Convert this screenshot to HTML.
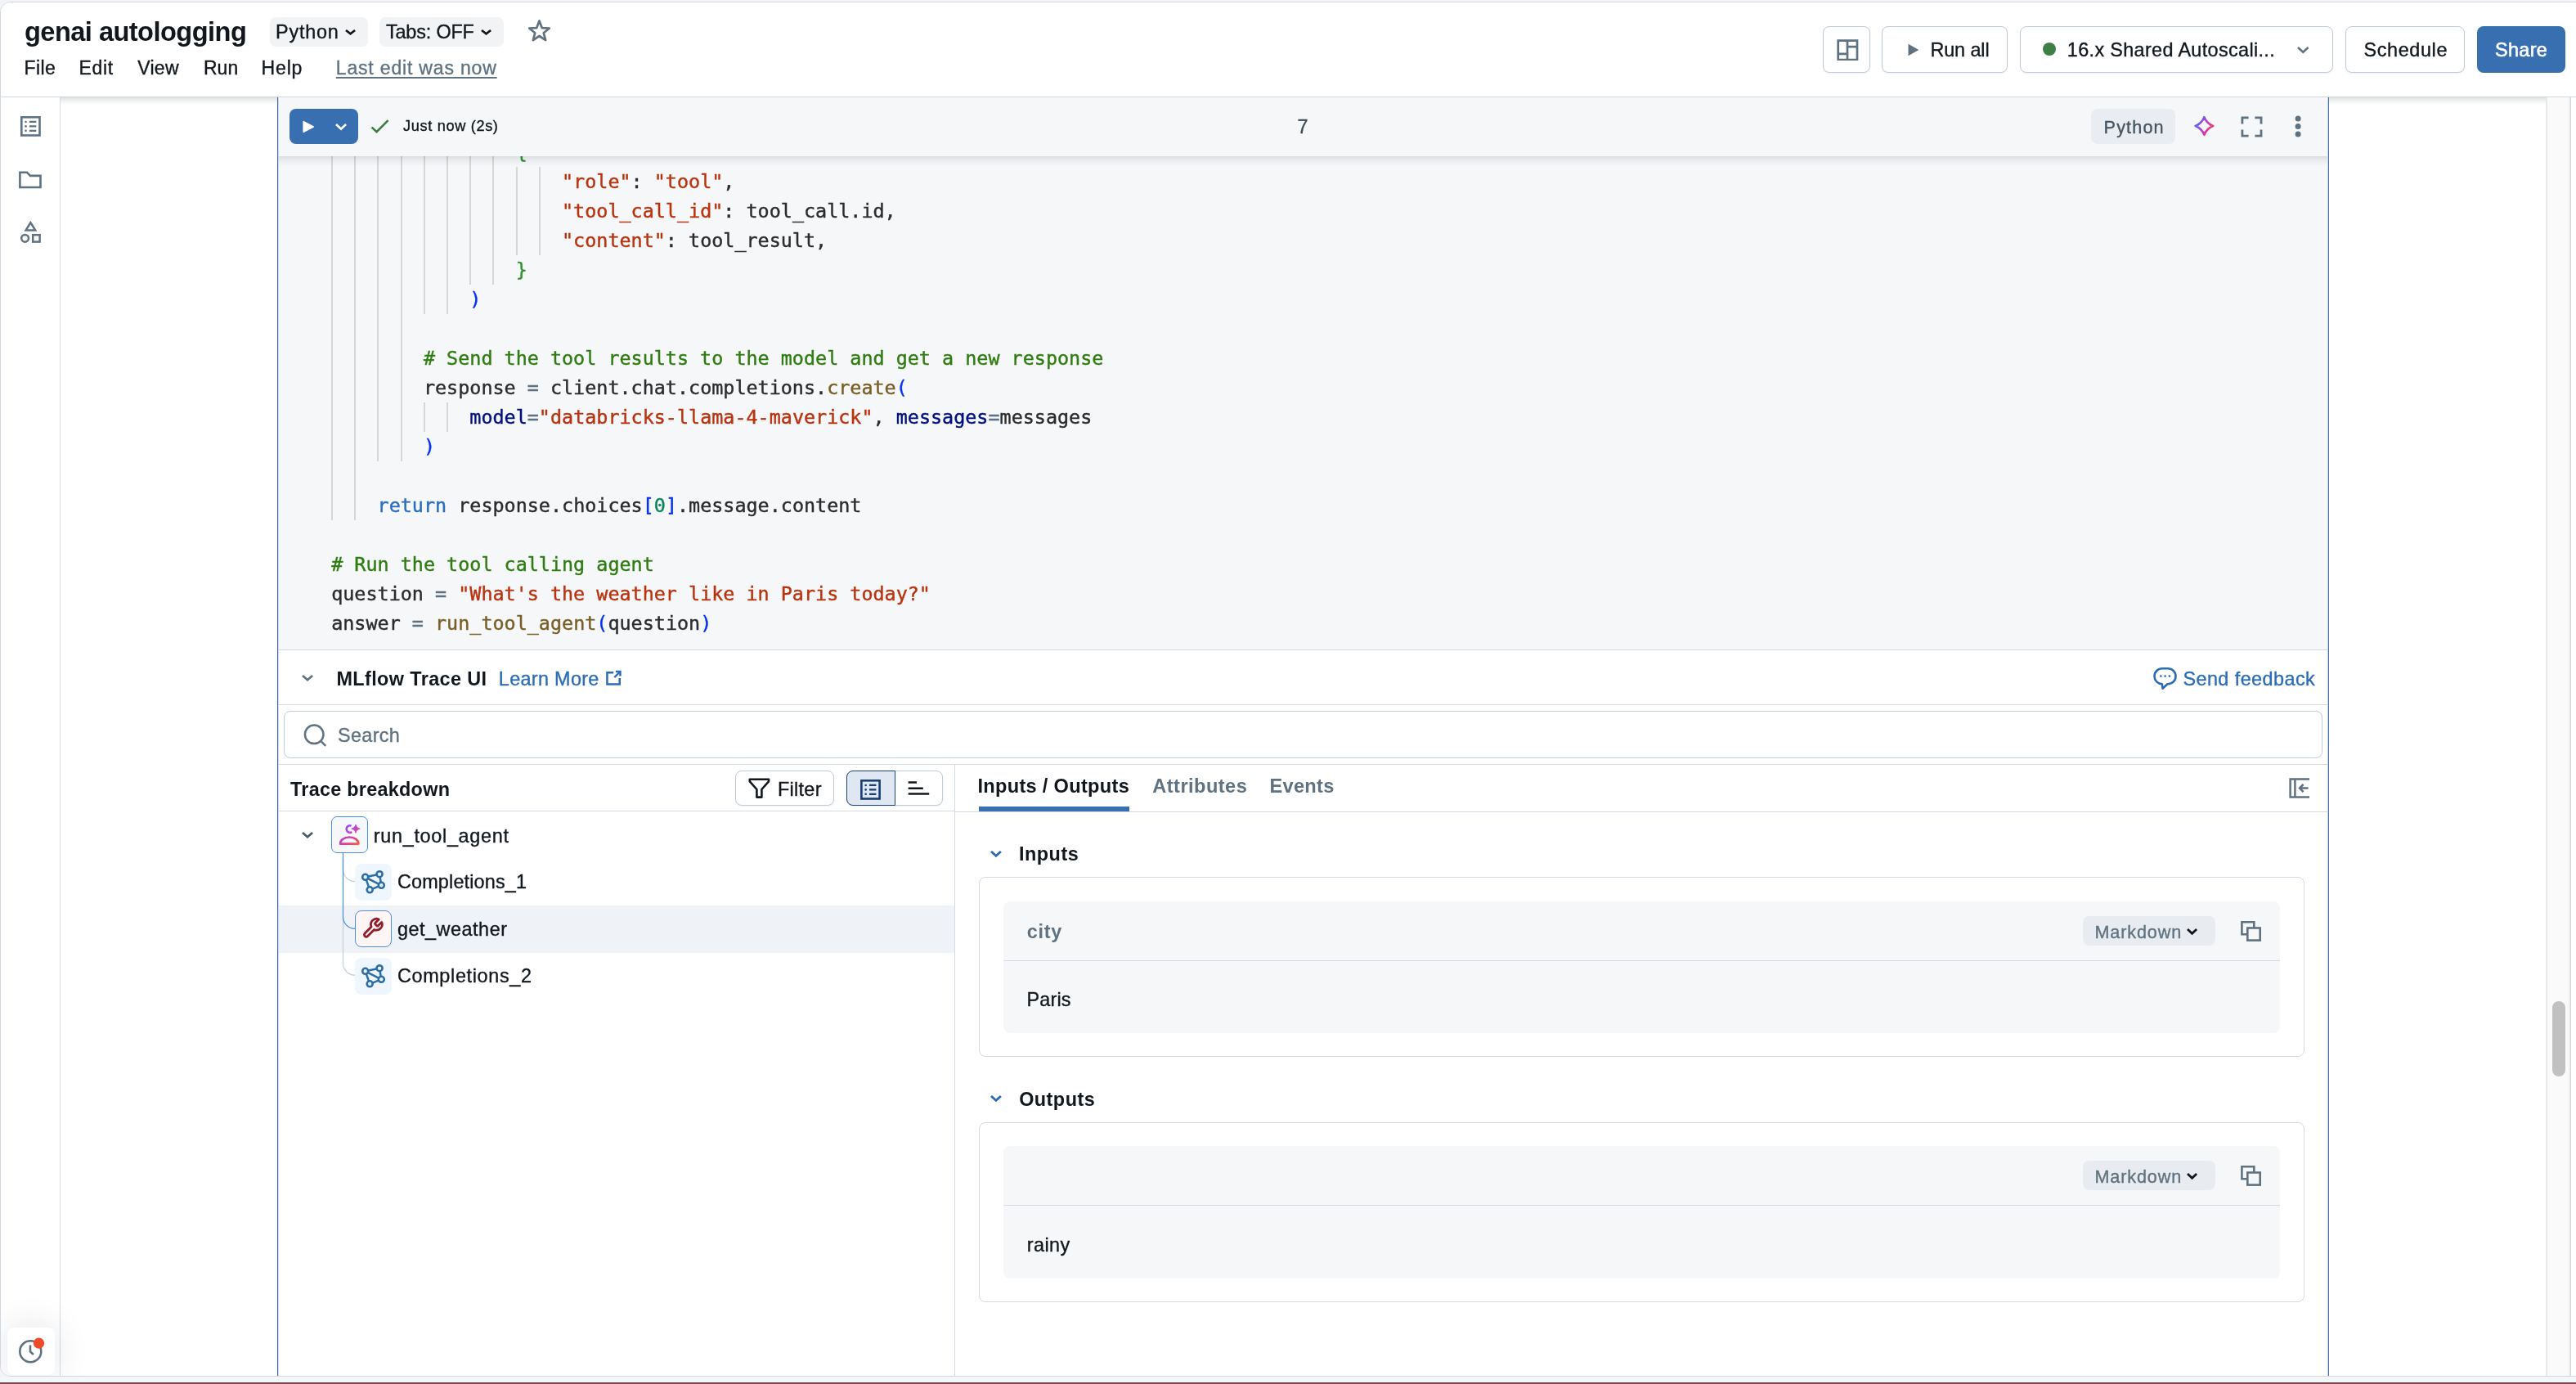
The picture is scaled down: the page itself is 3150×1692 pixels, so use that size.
<!DOCTYPE html>
<html lang="en">
<head>
<meta charset="utf-8">
<title>genai autologging</title>
<style>
html,body{margin:0;padding:0;}
body{width:3150px;height:1692px;background:#f2f4f7;font-family:"Liberation Sans",sans-serif;color:#11171c;}
#root{position:relative;width:3150px;height:1692px;overflow:hidden;background:#f2f4f7;}
*{box-sizing:border-box;}
.abs{position:absolute;}
.t{position:absolute;white-space:nowrap;line-height:1;-webkit-text-stroke:0.35px;}
#frame{position:absolute;left:0;top:2px;width:3160px;height:1681px;background:#fff;border:1px solid #d0d7e0;border-radius:13px 0 0 13px;overflow:hidden;}
#in{will-change:transform;position:absolute;left:-1px;top:-3px;width:3150px;height:1692px;}
#bottomband{position:absolute;left:0;top:1683px;width:3150px;height:7px;background:#f5f6f8;border-bottom:1px solid #fff;}
#bottomline{position:absolute;left:0;top:1690px;width:3150px;height:2px;background:#7b4549;}
#header{position:absolute;left:0;top:0;width:3150px;height:119px;background:#fff;border-bottom:1px solid #cfd7e1;z-index:20;}
.pill{position:absolute;background:#f2f3f5;border-radius:7px;}
.btn{position:absolute;background:#fff;border:1px solid #c0cbd8;border-radius:8px;box-shadow:0 1px 2px rgba(30,45,70,.07);}
#sidebar{position:absolute;left:0;top:119px;width:74px;height:1570px;border-right:1px solid #d3dae3;background:#fff;z-index:5;}
#cell{position:absolute;left:339px;top:119px;width:2509px;height:1570px;border-left:1px solid #3d71b1;border-right:1px solid #3d71b1;background:#fff;}
#cell:before,#cell:after{content:'';position:absolute;top:0;width:1px;height:100%;background:rgba(61,113,177,.28);}
#cell:before{left:0}#cell:after{right:0}
.hsh{position:absolute;top:119px;height:10px;background:linear-gradient(rgba(40,48,48,.15),rgba(40,48,48,.05) 50%,rgba(40,48,48,0));z-index:6;}
#celltb{position:absolute;left:341px;top:119px;width:2505px;height:72px;border-radius:5px 5px 0 0;background:#f6f7f9;z-index:10;}
#tsh{position:absolute;left:341px;top:191px;width:2505px;height:12px;background:linear-gradient(rgba(30,40,60,.12),rgba(30,40,60,.055) 40%,rgba(30,40,60,0));z-index:10;}
#code{position:absolute;left:341px;top:191px;width:2505px;height:604px;background:#f6f7f9;border-bottom:1px solid #d3dae3;overflow:hidden;}
.cl{position:absolute;left:64.2px;height:36px;line-height:36px;font-family:"DejaVu Sans Mono","Liberation Mono",monospace;font-size:23.42px;white-space:pre;color:#2a2c2e;-webkit-text-stroke:0.4px;}
.g{position:absolute;width:2px;background:#d6d6d6;}
.s{color:#b9330f}.c{color:#2f7d12}.k{color:#2a6fbf}.f{color:#795e26}.v{color:#001080}.b1{color:#0431fa}.b2{color:#319331}.n{color:#098658}.o{color:#5f7281}
#gutter{position:absolute;left:3113px;top:119px;width:31px;height:1570px;background:#fafafa;border-left:2px solid #e8e8e8;border-right:1px solid #cfd6df;z-index:4;}
#gutter:after{content:'';position:absolute;right:0;top:0;width:2px;height:100%;background:#efefef;}
#thumb{position:absolute;left:3121px;top:1224px;width:16px;height:92px;border-radius:8px;background:#c1c1c1;z-index:6;}
.hl{position:absolute;height:1px;background:#d3dae3;}
.vl{position:absolute;width:1px;background:#d3dae3;}
#hdr,#tb,#out{position:absolute;left:0;top:0;}
#hdr{z-index:30}#tb{z-index:15}#out{z-index:3}#sb{position:absolute;left:0;top:0;z-index:7}
.card{position:absolute;border:1px solid #d3dae3;border-radius:8px;background:#fff;}
.inner{position:absolute;background:#f6f7f9;border-radius:8px;}
</style>
</head>
<body>
<div id="root">
<div id="frame"><div id="in">
<div id="sidebar"></div>
<div id="cell"></div>
<div class="hsh" style="left:74px;width:265px"></div><div class="hsh" style="left:2848px;width:265px"></div>
<div id="code">
<div class="g" style="left:64px;top:-23px;height:468px"></div>
<div class="g" style="left:92px;top:-23px;height:468px"></div>
<div class="g" style="left:120px;top:-23px;height:396px"></div>
<div class="g" style="left:149px;top:-23px;height:396px"></div>
<div class="g" style="left:177px;top:-23px;height:216px"></div>
<div class="g" style="left:177px;top:301px;height:36px"></div>
<div class="g" style="left:205px;top:-23px;height:216px"></div>
<div class="g" style="left:205px;top:301px;height:36px"></div>
<div class="g" style="left:233px;top:-23px;height:180px"></div>
<div class="g" style="left:261px;top:-23px;height:180px"></div>
<div class="g" style="left:290px;top:13px;height:108px"></div>
<div class="g" style="left:318px;top:13px;height:108px"></div>
<div class="cl" style="top:-23px">                <span class="b2">{</span></div>
<div class="cl" style="top:13px">                    <span class="s">"role"</span>: <span class="s">"tool"</span>,</div>
<div class="cl" style="top:49px">                    <span class="s">"tool_call_id"</span>: tool_call.id,</div>
<div class="cl" style="top:85px">                    <span class="s">"content"</span>: tool_result,</div>
<div class="cl" style="top:121px">                <span class="b2">}</span></div>
<div class="cl" style="top:157px">            <span class="b1">)</span></div>
<div class="cl" style="top:229px">        <span class="c"># Send the tool results to the model and get a new response</span></div>
<div class="cl" style="top:265px">        response <span class="o">=</span> client.chat.completions.<span class="f">create</span><span class="b1">(</span></div>
<div class="cl" style="top:301px">            <span class="v">model</span><span class="o">=</span><span class="s">"databricks-llama-4-maverick"</span>, <span class="v">messages</span><span class="o">=</span>messages</div>
<div class="cl" style="top:337px">        <span class="b1">)</span></div>
<div class="cl" style="top:409px">    <span class="k">return</span> response.choices<span class="b1">[</span><span class="n">0</span><span class="b1">]</span>.message.content</div>
<div class="cl" style="top:481px"><span class="c"># Run the tool calling agent</span></div>
<div class="cl" style="top:517px">question <span class="o">=</span> <span class="s">"What's the weather like in Paris today?"</span></div>
<div class="cl" style="top:553px">answer <span class="o">=</span> <span class="f">run_tool_agent</span><span class="b1">(</span>question<span class="b1">)</span></div>
</div>
<div id="celltb"></div><div id="tsh"></div>
<div id="gutter"></div>
<div id="thumb"></div>
<div id="header"></div>
<div id="hdr">
<div class="t" id="title" style="left:30.00px;top:22.50px;font-size:32.60px;font-weight:700;-webkit-text-stroke:0;letter-spacing:-0.544px;">genai autologging</div>
<div class="pill" id="pill1" style="left:330.0px;top:21.0px;width:120.0px;height:35.6px;"></div>
<div class="t" id="py1" style="left:337.00px;top:27.60px;font-size:23.40px;letter-spacing:0.790px;">Python</div>
<svg class="abs" id="ch1" style="left:420.96px;top:34.56px;" width="15.09" height="8.34" viewBox="-2.00 -2.00 15.09 8.34" fill="none"><path d="M0 0 L5.54 4.34 L11.09 0" stroke="#11171c" stroke-width="2.70" stroke-linejoin="miter" stroke-linecap="butt"/></svg>
<div class="pill" id="pill2" style="left:464.0px;top:21.0px;width:152.0px;height:35.6px;"></div>
<div class="t" id="tabs" style="left:471.90px;top:27.60px;font-size:23.40px;letter-spacing:-0.152px;">Tabs: OFF</div>
<svg class="abs" id="ch2" style="left:586.96px;top:34.56px;" width="15.09" height="8.34" viewBox="-2.00 -2.00 15.09 8.34" fill="none"><path d="M0 0 L5.54 4.34 L11.09 0" stroke="#11171c" stroke-width="2.70" stroke-linejoin="miter" stroke-linecap="butt"/></svg>
<svg class="abs" id="star" style="left:642px;top:20px;" width="36" height="36" viewBox="642 20 36 36" fill="none"><path d="M659.50 25.50 L662.73 34.05 L671.86 34.48 L664.73 40.20 L667.14 49.02 L659.50 44.00 L651.86 49.02 L654.27 40.20 L647.14 34.48 L656.27 34.05 Z" stroke="#5f7281" stroke-width="2.7" stroke-linejoin="round"/></svg>
<div class="t" id="m0" style="left:29.60px;top:71.80px;font-size:23.00px;letter-spacing:0.380px;">File</div>
<div class="t" id="m1" style="left:96.60px;top:71.80px;font-size:23.00px;letter-spacing:0.656px;">Edit</div>
<div class="t" id="m2" style="left:168.20px;top:71.80px;font-size:23.00px;letter-spacing:0.321px;">View</div>
<div class="t" id="m3" style="left:249.00px;top:71.80px;font-size:23.00px;">Run</div>
<div class="t" id="m4" style="left:319.60px;top:71.80px;font-size:23.00px;letter-spacing:0.832px;">Help</div>
<div class="t" id="lastedit" style="left:410.80px;top:71.80px;font-size:23.00px;color:#5f7281;letter-spacing:0.824px;text-decoration:underline;text-decoration-thickness:2px;text-underline-offset:3px;">Last edit was now</div>
<div class="btn" id="b_layout" style="left:2229.0px;top:32.0px;width:58.0px;height:57.0px;"></div>
<svg class="abs" id="i_layout" style="left:2244.50px;top:46.70px;" width="28.00" height="27.50" viewBox="0 0 28 27.5" fill="none"><path d="M2.7 2.7 H26 V26 H2.7 Z M14 2.7 V26 M2.7 18.9 H14 M14 10.2 H26" stroke="#5f7281" stroke-width="2.7"/></svg>
<div class="btn" id="b_runall" style="left:2301.0px;top:32.0px;width:154.0px;height:57.0px;"></div>
<svg class="abs" id="i_play" style="left:2333.00px;top:53.00px;" width="14.00" height="16.00" viewBox="0 0 14 16" fill="none"><path d="M0.5 0.8 L13.3 8 L0.5 15.2 Z" fill="#5f7281"/></svg>
<div class="t" id="runall" style="left:2360.40px;top:49.60px;font-size:23.40px;letter-spacing:-0.090px;">Run all</div>
<div class="btn" id="b_cluster" style="left:2470.0px;top:32.0px;width:383.0px;height:57.0px;"></div>
<div class="abs" id="dot" style="left:2498.3px;top:52.3px;width:16.2px;height:16.2px;border-radius:50%;background:#3d7f45"></div>
<div class="t" id="cluster" style="left:2527.80px;top:49.60px;font-size:23.40px;letter-spacing:0.354px;">16.x Shared Autoscali...</div>
<svg class="abs" id="ch3" style="left:2807.82px;top:55.82px;" width="16.56" height="9.74" viewBox="-2.00 -2.00 16.56 9.74" fill="none"><path d="M0 0 L6.28 5.74 L12.56 0" stroke="#5f7281" stroke-width="2.60" stroke-linejoin="miter" stroke-linecap="butt"/></svg>
<div class="btn" id="b_sched" style="left:2868.0px;top:32.0px;width:146.0px;height:57.0px;"></div>
<div class="t" id="sched" style="left:2890.40px;top:49.60px;font-size:23.40px;letter-spacing:0.646px;">Schedule</div>
<div class="abs" id="b_share" style="left:3029.0px;top:32.0px;width:108.0px;height:57.0px;background:#376fb1;border-radius:8px;"></div>
<div class="t" id="share" style="left:3050.90px;top:49.60px;font-size:23.40px;color:#fff;letter-spacing:0.389px;-webkit-text-stroke:0.6px;">Share</div>
</div>
<div id="sb">
<svg class="abs" id="sb1" style="left:25.00px;top:142.00px;" width="24.80" height="24.80" viewBox="0 0 25 25" fill="none"><rect x="1.3" y="1.3" width="22.4" height="22.4" stroke="#5f7281" stroke-width="2.6"/><path d="M11 7 H19.5 M11 12.5 H19.5 M11 18 H19.5" stroke="#5f7281" stroke-width="2.2"/><circle cx="6.6" cy="7" r="1.3" fill="#5f7281"/><circle cx="6.6" cy="12.5" r="1.3" fill="#5f7281"/><circle cx="6.6" cy="18" r="1.3" fill="#5f7281"/></svg>
<svg class="abs" id="sb2" style="left:22.00px;top:207.50px;" width="30.00" height="24.00" viewBox="0 0 30 24" fill="none"><path d="M2.4 2.8 H11 L15 6.9 H27.5 V21 H2.4 Z" stroke="#5f7281" stroke-width="2.6" stroke-linejoin="miter"/></svg>
<svg class="abs" id="sb3" style="left:24.00px;top:269.00px;" width="27.00" height="29.00" viewBox="0 0 27 29" fill="none"><path d="M13.4 3.2 L19.2 12.6 H7.6 Z" stroke="#5f7281" stroke-width="2.5" stroke-linejoin="miter"/><circle cx="6.6" cy="22.3" r="4.4" stroke="#5f7281" stroke-width="2.5"/><rect x="16.2" y="18.2" width="8.4" height="8.4" stroke="#5f7281" stroke-width="2.5"/></svg>
<div class="abs" id="hist" style="left:9.0px;top:1623.0px;width:58.0px;height:57.5px;background:#fff;border-radius:8px;box-shadow:0 0 40px rgba(30,45,70,.13);"></div>
<svg class="abs" id="i_hist" style="left:20.00px;top:1634.00px;" width="36.00" height="36.00" viewBox="0 0 36 36" fill="none"><circle cx="17.3" cy="18.2" r="13" stroke="#5f7281" stroke-width="2.6"/><path d="M17 10.5 V18.5 L21 22" stroke="#5f7281" stroke-width="2.6"/><circle cx="27.5" cy="8.2" r="6.6" fill="#f04a2b"/></svg>
</div>
<div id="tb">
<div class="abs" id="runbtn" style="left:354.0px;top:133.0px;width:84.0px;height:43.0px;background:#376fb1;border-radius:8px;"></div>
<svg class="abs" id="i_run" style="left:368.50px;top:146.00px;" width="16.50" height="18.00" viewBox="0 0 16.5 18" fill="none"><path d="M2.2 2.6 L14.2 9 L2.2 15.4 Z" fill="#fff" stroke="#fff" stroke-width="1.6" stroke-linejoin="round"/></svg>
<svg class="abs" id="ch4" style="left:408.56px;top:149.96px;" width="16.09" height="9.64" viewBox="-2.00 -2.00 16.09 9.64" fill="none"><path d="M0 0 L6.04 5.64 L12.09 0" stroke="#fff" stroke-width="2.70" stroke-linejoin="miter" stroke-linecap="butt"/></svg>
<svg class="abs" id="i_check" style="left:451.00px;top:144.00px;" width="27.00" height="21.00" viewBox="0 0 27 21" fill="none"><path d="M3.6 11.6 L9.6 17.2 L23.6 3.2" stroke="#3a7d3f" stroke-width="2.6"/></svg>
<div class="t" id="justnow" style="left:493.10px;top:145.20px;font-size:18.20px;letter-spacing:0.640px;">Just now (2s)</div>
<div class="t" id="seven" style="left:1586.50px;top:143.60px;font-size:23.40px;color:#3d4b58;">7</div>
<div class="abs" id="pill3" style="left:2557.0px;top:133.1px;width:103.0px;height:42.6px;background:#e9ecf1;border-radius:8px;"></div>
<div class="t" id="py2" style="left:2572.60px;top:145.00px;font-size:21.60px;color:#445461;letter-spacing:1.151px;">Python</div>
<svg class="abs" id="spark" style="left:2681px;top:140px" width="29" height="28" viewBox="0 0 29 28" fill="none"><defs><linearGradient id="sg" x1="3" y1="9" x2="25" y2="22" gradientUnits="userSpaceOnUse"><stop offset="0" stop-color="#4a6ff0"/><stop offset=".45" stop-color="#b040d8"/><stop offset=".75" stop-color="#e03c8c"/><stop offset="1" stop-color="#f4552c"/></linearGradient></defs><path d="M14.4 3.2 C15.9 7.8 20.6 12.5 25.2 14 C20.6 15.5 15.9 20.2 14.4 24.8 C12.9 20.2 8.2 15.5 3.6 14 C8.2 12.5 12.9 7.8 14.4 3.2 Z" stroke="url(#sg)" stroke-width="2.6" stroke-linejoin="round"/></svg>
<svg class="abs" id="i_full" style="left:2739.00px;top:140.50px;" width="29.00" height="28.00" viewBox="0 0 29 28" fill="none"><path d="M2.9 10.5 V2.9 H10.6 M18.4 2.9 H26 V10.5 M26 17.6 V25.2 H18.4 M10.6 25.2 H2.9 V17.6" stroke="#5f7281" stroke-width="2.8"/></svg>
<svg class="abs" id="i_kebab" style="left:2805.00px;top:140.00px;" width="10.00" height="30.00" viewBox="0 0 10 30" fill="none"><circle cx="5.1" cy="5" r="3.5" fill="#5f7281"/><circle cx="5.1" cy="14.5" r="3.5" fill="#5f7281"/><circle cx="5.1" cy="24.1" r="3.5" fill="#5f7281"/></svg>
</div>
<div id="out">
<svg class="abs" id="ch5" style="left:368.42px;top:824.12px;" width="16.06" height="9.24" viewBox="-2.00 -2.00 16.06 9.24" fill="none"><path d="M0 0 L6.03 5.24 L12.06 0" stroke="#5f7281" stroke-width="2.60" stroke-linejoin="miter" stroke-linecap="butt"/></svg>
<div class="t" id="mlflow" style="left:411.40px;top:818.60px;font-size:23.40px;font-weight:700;-webkit-text-stroke:0;letter-spacing:0.405px;">MLflow Trace UI</div>
<div class="t" id="learn" style="left:609.80px;top:818.60px;font-size:23.40px;color:#2b6cb5;letter-spacing:0.326px;">Learn More</div>
<svg class="abs" id="i_ext" style="left:738px;top:816px;" width="26" height="26" viewBox="738 816 26 26" fill="none"><path d="M750.2 822.35 H742.45 V836.55 H757.75 V829.1 M752.9 820.95 H758.45 V826.5" stroke="#2b6cb5" stroke-width="2.5"/><path d="M751.3 828.1 L758.2 821.2" stroke="#2b6cb5" stroke-width="2.3"/></svg>
<svg class="abs" id="i_fb" style="left:2630px;top:812px;" width="36" height="34" viewBox="2630 812 36 34" fill="none"><path d="M2644 817.2 H2651 A9.5 9.5 0 0 1 2660.5 826.7 A9.5 9.5 0 0 1 2651 836.2 H2650.4 L2644.6 841.8 L2643.7 836.2 A9.5 9.5 0 0 1 2634.5 826.7 A9.5 9.5 0 0 1 2644 817.2 Z" stroke="#2b6cb5" stroke-width="2.6" stroke-linejoin="round"/><circle cx="2642.3" cy="826.6" r="1.3" fill="#2b6cb5"/><circle cx="2647.6" cy="826.6" r="1.3" fill="#2b6cb5"/><circle cx="2652.9" cy="826.6" r="1.3" fill="#2b6cb5"/></svg>
<div class="t" id="feedback" style="left:2669.40px;top:818.60px;font-size:23.40px;color:#2b6cb5;letter-spacing:0.440px;">Send feedback</div>
<div class="hl" style="left:341px;top:861px;width:2505px"></div>
<div class="abs" id="search" style="left:347.2px;top:869.2px;width:2492.6px;height:57.6px;border:1px solid #c0ccd8;border-radius:8px;background:#fff;"></div>
<svg class="abs" id="i_search" style="left:370.00px;top:884.00px;" width="30.00" height="30.00" viewBox="0 0 30 30" fill="none"><circle cx="14.2" cy="13.8" r="11.3" stroke="#5f7281" stroke-width="2.5"/><path d="M22.2 21.8 L28.2 27.8" stroke="#5f7281" stroke-width="2.5"/></svg>
<div class="t" id="searchtx" style="left:413.10px;top:887.60px;font-size:23.40px;color:#5f7281;letter-spacing:0.331px;">Search</div>
<div class="hl" style="left:341px;top:934px;width:2505px"></div>
<div class="vl" style="left:1167px;top:935px;height:760px"></div>
<div class="t" id="tracebd" style="left:355.00px;top:953.60px;font-size:23.40px;font-weight:700;-webkit-text-stroke:0;letter-spacing:0.273px;">Trace breakdown</div>
<div class="btn" id="b_filter" style="left:899.0px;top:942.0px;width:121.0px;height:43.0px;"></div>
<svg class="abs" id="i_filter" style="left:914.00px;top:949.50px;" width="29.00" height="27.50" viewBox="0 0 29 27.5" fill="none"><path d="M2.8 2.8 H26 V5.4 L17.4 15 V24.6 H11.4 V15 L2.8 5.4 Z" stroke="#11171c" stroke-width="2.6" stroke-linejoin="round"/></svg>
<div class="t" id="filter" style="left:950.90px;top:953.60px;font-size:23.40px;letter-spacing:0.320px;">Filter</div>
<div class="btn" id="seg" style="left:1035.0px;top:942.0px;width:118.0px;height:43.0px;"></div>
<div class="abs" id="segsel" style="left:1035.0px;top:942.0px;width:59.5px;height:43.0px;background:#dfe7f2;border:1.5px solid #1d4472;border-radius:8px 0 0 8px;"></div>
<svg class="abs" id="segi1" style="left:1052.00px;top:953.20px;" width="25.00" height="24.80" viewBox="0 0 25 25" fill="none"><rect x="1.3" y="1.3" width="22.4" height="22.4" stroke="#173e6e" stroke-width="2.6"/><path d="M11 7 H19.5 M11 12.5 H19.5 M11 18 H19.5" stroke="#173e6e" stroke-width="2.2"/><circle cx="6.6" cy="7" r="1.3" fill="#173e6e"/><circle cx="6.6" cy="12.5" r="1.3" fill="#173e6e"/><circle cx="6.6" cy="18" r="1.3" fill="#173e6e"/></svg>
<svg class="abs" id="segi2" style="left:1108.00px;top:952.00px;" width="32.00" height="23.00" viewBox="0 0 32 23" fill="none"><path d="M2.7 4.4 H13 M2.7 11.7 H20.8 M2.7 18.4 H28.2" stroke="#11171c" stroke-width="2.5"/></svg>
<div class="hl" style="left:341px;top:991px;width:826px"></div>
<div class="abs" id="selrow" style="left:341.0px;top:1107.2px;width:826.0px;height:57.6px;background:#eff3f8;"></div>
<svg class="abs" id="tree" style="left:410px;top:1040px;" width="30" height="160" viewBox="410 1040 30 160" fill="none"><path d="M419.5 1121 V1177.7 A14.5 14.5 0 0 0 434 1192.2 H435" stroke="#c3ced9" stroke-width="1.2"/><path d="M419.5 1050 V1063.1 A14.5 14.5 0 0 0 434 1077.6 H435" stroke="#c3ced9" stroke-width="1.2"/><path d="M419.5 1043 V1120.9 A14.5 14.5 0 0 0 434 1135.4 H435" stroke="#4a90e2" stroke-width="1.25"/></svg>
<svg class="abs" id="ch6" style="left:368.32px;top:1016.42px;" width="16.06" height="9.24" viewBox="-2.00 -2.00 16.06 9.24" fill="none"><path d="M0 0 L6.03 5.24 L12.06 0" stroke="#4b5a68" stroke-width="2.60" stroke-linejoin="miter" stroke-linecap="butt"/></svg>
<div class="abs" id="ic0" style="left:405.0px;top:998.0px;width:45.0px;height:45.0px;background:#f6f7f9;border:1px solid #4a90e2;border-radius:7px;"></div>
<svg class="abs" id="agent" style="left:408px;top:1000px;" width="40" height="40" viewBox="408 1000 40 40" fill="none"><defs><linearGradient id="ag" x1="416" y1="1006" x2="440" y2="1034" gradientUnits="userSpaceOnUse"><stop offset="0" stop-color="#5f5ff5"/><stop offset=".38" stop-color="#b446e0"/><stop offset=".68" stop-color="#e8408c"/><stop offset="1" stop-color="#f86a26"/></linearGradient></defs><path d="M429.6 1009.6 A4.3 4.3 0 1 0 430.3 1017.2" stroke="url(#ag)" stroke-width="2.6" stroke-linecap="butt"/><path d="M435 1008.2 C435.5 1011.5 436.7 1012.7 440 1013.2 C436.7 1013.7 435.5 1014.9 435 1018.2 C434.5 1014.9 433.3 1013.7 430 1013.2 C433.3 1012.7 434.5 1011.5 435 1008.2 Z" fill="url(#ag)" stroke="url(#ag)" stroke-width="1.1" stroke-linejoin="round"/><path d="M416 1031.6 C416 1027.2 420.6 1023.5 427.2 1023.5 C433.8 1023.5 438.4 1027.2 438.4 1031.6 Z" stroke="url(#ag)" stroke-width="2.6" stroke-linejoin="round"/></svg>
<div class="t" id="t0" style="left:456.80px;top:1010.60px;font-size:23.40px;letter-spacing:0.697px;">run_tool_agent</div>
<div class="abs" id="ic1" style="left:434.0px;top:1056.0px;width:45.0px;height:44.5px;background:#f0f6fd;border-radius:8px;"></div>
<svg class="abs" id="net1" style="left:434px;top:1056px;" width="46" height="46" viewBox="434 1056 46 46" fill="none"><path d="M446.7 1072.3 L464.1 1068.7" stroke="#2b6ea6" stroke-width="2.5"/><path d="M446.7 1072.3 L466.3 1082.3" stroke="#2b6ea6" stroke-width="2.5"/><path d="M446.7 1072.3 L452.2 1087.8" stroke="#2b6ea6" stroke-width="2.5"/><path d="M464.1 1068.7 L466.3 1082.3" stroke="#2b6ea6" stroke-width="2.5"/><path d="M466.3 1082.3 L452.2 1087.8" stroke="#2b6ea6" stroke-width="2.5"/><circle cx="446.7" cy="1072.3" r="3.5" fill="#f0f6fd" stroke="#2b6ea6" stroke-width="2.6"/><circle cx="464.1" cy="1068.7" r="3.5" fill="#f0f6fd" stroke="#2b6ea6" stroke-width="2.6"/><circle cx="466.3" cy="1082.3" r="3.5" fill="#f0f6fd" stroke="#2b6ea6" stroke-width="2.6"/><circle cx="452.2" cy="1087.8" r="3.5" fill="#f0f6fd" stroke="#2b6ea6" stroke-width="2.6"/></svg>
<div class="t" id="t1" style="left:486.00px;top:1066.60px;font-size:23.40px;letter-spacing:0.159px;">Completions_1</div>
<div class="abs" id="ic2" style="left:434.0px;top:1113.0px;width:45.0px;height:45.0px;background:#fff5f5;border:1px solid #4a90e2;border-radius:8px;"></div>
<svg class="abs" id="wrench" style="left:442.4px;top:1121px" width="27.6" height="27.6" viewBox="0 0 24 24" fill="none"><path d="M14.7 6.3a1 1 0 0 0 0 1.4l1.6 1.6a1 1 0 0 0 1.4 0l3.77-3.77a6 6 0 0 1-7.94 7.94l-6.91 6.91a2.12 2.12 0 0 1-3-3l6.91-6.91a6 6 0 0 1 7.94-7.94l-3.76 3.76z" stroke="#8f1c28" stroke-width="2.4" stroke-linejoin="round" stroke-linecap="round"/></svg>
<div class="t" id="t2" style="left:486.00px;top:1124.60px;font-size:23.40px;letter-spacing:0.521px;">get_weather</div>
<div class="abs" id="ic3" style="left:434.0px;top:1171.0px;width:45.0px;height:45.0px;background:#f0f6fd;border-radius:8px;"></div>
<svg class="abs" id="net2" style="left:434px;top:1171px;" width="46" height="46" viewBox="434 1171 46 46" fill="none"><path d="M446.7 1187.3 L464.1 1183.7" stroke="#2b6ea6" stroke-width="2.5"/><path d="M446.7 1187.3 L466.3 1197.3" stroke="#2b6ea6" stroke-width="2.5"/><path d="M446.7 1187.3 L452.2 1202.8" stroke="#2b6ea6" stroke-width="2.5"/><path d="M464.1 1183.7 L466.3 1197.3" stroke="#2b6ea6" stroke-width="2.5"/><path d="M466.3 1197.3 L452.2 1202.8" stroke="#2b6ea6" stroke-width="2.5"/><circle cx="446.7" cy="1187.3" r="3.5" fill="#f0f6fd" stroke="#2b6ea6" stroke-width="2.6"/><circle cx="464.1" cy="1183.7" r="3.5" fill="#f0f6fd" stroke="#2b6ea6" stroke-width="2.6"/><circle cx="466.3" cy="1197.3" r="3.5" fill="#f0f6fd" stroke="#2b6ea6" stroke-width="2.6"/><circle cx="452.2" cy="1202.8" r="3.5" fill="#f0f6fd" stroke="#2b6ea6" stroke-width="2.6"/></svg>
<div class="t" id="t3" style="left:486.00px;top:1181.60px;font-size:23.40px;letter-spacing:0.659px;">Completions_2</div>
<div class="t" id="tab1" style="left:1195.40px;top:949.50px;font-size:23.60px;font-weight:700;-webkit-text-stroke:0;letter-spacing:0.300px;">Inputs / Outputs</div>
<div class="t" id="tab2" style="left:1409.30px;top:949.50px;font-size:23.60px;font-weight:700;-webkit-text-stroke:0;color:#5f7281;letter-spacing:0.451px;">Attributes</div>
<div class="t" id="tab3" style="left:1552.50px;top:949.50px;font-size:23.60px;font-weight:700;-webkit-text-stroke:0;color:#5f7281;letter-spacing:0.282px;">Events</div>
<div class="abs" id="tabul" style="left:1197.0px;top:986.0px;width:183.8px;height:6.0px;background:#376fb1;"></div>
<div class="hl" style="left:1168px;top:992px;width:1678px"></div>
<svg class="abs" id="i_collapse" style="left:2798.00px;top:950.00px;" width="28.00" height="27.00" viewBox="0 0 28 27" fill="none"><path d="M26 2.6 H2.6 V24.6 H26 M8.4 2.6 V24.6 M24.6 13.6 H14.4 M18.6 9 L14 13.6 L18.6 18.2" stroke="#5f7281" stroke-width="2.5"/></svg>
<svg class="abs" id="inch" style="left:1210.29px;top:1038.99px;" width="15.92" height="9.33" viewBox="-2.00 -2.00 15.92 9.33" fill="none"><path d="M0 0 L5.96 5.33 L11.92 0" stroke="#2b6cb5" stroke-width="2.80" stroke-linejoin="miter" stroke-linecap="butt"/></svg>
<div class="t" id="intitle" style="left:1246.10px;top:1032.60px;font-size:23.40px;font-weight:700;-webkit-text-stroke:0;letter-spacing:0.482px;">Inputs</div>
<div class="card" id="incard" style="left:1197.0px;top:1072.0px;width:1621.0px;height:220.0px;"></div>
<div class="inner" id="ininner" style="left:1227.0px;top:1102.0px;width:1561.0px;height:161.0px;"></div>
<div class="hl" style="left:1227px;top:1174px;width:1561px"></div>
<div class="t" id="inkey" style="left:1255.70px;top:1127.60px;font-size:23.40px;font-weight:700;-webkit-text-stroke:0;color:#5f7281;letter-spacing:0.793px;">city</div>
<div class="abs" id="inmd" style="left:2547.0px;top:1120.0px;width:162.0px;height:36.0px;background:#e8ebf0;border-radius:8px;"></div>
<div class="t" id="inmdt" style="left:2561.40px;top:1129.00px;font-size:21.60px;color:#5f7281;letter-spacing:0.880px;">Markdown</div>
<svg class="abs" id="inmdc" style="left:2672.90px;top:1134.40px;" width="15.10" height="9.30" viewBox="-2.00 -2.00 15.10 9.30" fill="none"><path d="M0 0 L5.55 5.30 L11.10 0" stroke="#11171c" stroke-width="2.80" stroke-linejoin="miter" stroke-linecap="butt"/></svg>
<svg class="abs" id="incopy" style="left:2736px;top:1123px;" width="34" height="31" viewBox="2736 1123 34 31" fill="none"><path d="M2756.3 1134.5 V1127.2 H2741.4 V1142.3 H2747" stroke="#5f7281" stroke-width="2.6"/><rect x="2748.3" y="1134.5" width="15.4" height="15.1" stroke="#5f7281" stroke-width="2.6"/></svg>
<div class="t" id="inval" style="left:1255.40px;top:1210.60px;font-size:23.40px;letter-spacing:0.222px;">Paris</div>
<svg class="abs" id="ouch" style="left:1210.29px;top:1338.49px;" width="15.92" height="9.33" viewBox="-2.00 -2.00 15.92 9.33" fill="none"><path d="M0 0 L5.96 5.33 L11.92 0" stroke="#2b6cb5" stroke-width="2.80" stroke-linejoin="miter" stroke-linecap="butt"/></svg>
<div class="t" id="outitle" style="left:1246.20px;top:1332.60px;font-size:23.40px;font-weight:700;-webkit-text-stroke:0;letter-spacing:0.470px;">Outputs</div>
<div class="card" id="oucard" style="left:1197.0px;top:1372.0px;width:1621.0px;height:220.0px;"></div>
<div class="inner" id="ouinner" style="left:1227.0px;top:1401.0px;width:1561.0px;height:161.5px;"></div>
<div class="hl" style="left:1227px;top:1473px;width:1561px"></div>
<div class="abs" id="oumd" style="left:2547.0px;top:1419.0px;width:162.0px;height:36.0px;background:#e8ebf0;border-radius:8px;"></div>
<div class="t" id="oumdt" style="left:2561.40px;top:1428.00px;font-size:21.60px;color:#5f7281;letter-spacing:0.880px;">Markdown</div>
<svg class="abs" id="oumdc" style="left:2672.90px;top:1433.40px;" width="15.10" height="9.30" viewBox="-2.00 -2.00 15.10 9.30" fill="none"><path d="M0 0 L5.55 5.30 L11.10 0" stroke="#11171c" stroke-width="2.80" stroke-linejoin="miter" stroke-linecap="butt"/></svg>
<svg class="abs" id="oucopy" style="left:2736px;top:1422px;" width="34" height="31" viewBox="2736 1422 34 31" fill="none"><path d="M2756.3 1433.5 V1426.2 H2741.4 V1441.3 H2747" stroke="#5f7281" stroke-width="2.6"/><rect x="2748.3" y="1433.5" width="15.4" height="15.1" stroke="#5f7281" stroke-width="2.6"/></svg>
<div class="t" id="ouval" style="left:1255.80px;top:1510.60px;font-size:23.40px;letter-spacing:0.420px;">rainy</div>
</div>
</div></div>
<div id="bottomband"></div>
<div id="bottomline"></div>
</div>
</body>
</html>
